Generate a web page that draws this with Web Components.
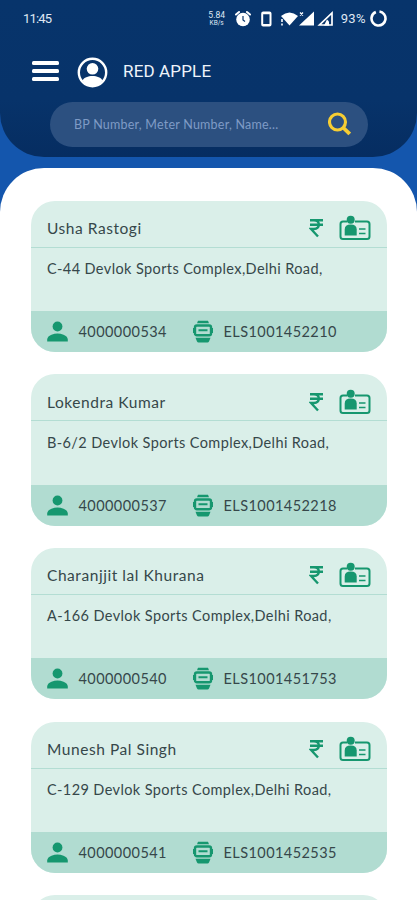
<!DOCTYPE html>
<html lang="en">
<head>
<meta charset="utf-8">
<meta name="viewport" content="width=device-width, initial-scale=1">
<title>Consumers</title>
<style>
    html, body {
        margin: 0;
        height: 100%;
        overflow: hidden;
    }
    body {
        font-family: Lato, "Open Sans", sans-serif;
        background: #fff;
    }
</style>
</head>
<body>
<app-screen>
    <status-bar slot="top"></status-bar>
    <app-header slot="top">RED APPLE</app-header>
    <search-box slot="top">BP Number, Meter Number, Name...</search-box>

    <consumer-card bp="4000000534" meter="ELS1001452210">
        <span slot="name">Usha Rastogi</span>
        <span slot="address">C-44 Devlok Sports Complex,Delhi Road,</span>
    </consumer-card>
    <consumer-card bp="4000000537" meter="ELS1001452218">
        <span slot="name">Lokendra Kumar</span>
        <span slot="address">B-6/2 Devlok Sports Complex,Delhi Road,</span>
    </consumer-card>
    <consumer-card bp="4000000540" meter="ELS1001451753">
        <span slot="name">Charanjjit lal Khurana</span>
        <span slot="address">A-166 Devlok Sports Complex,Delhi Road,</span>
    </consumer-card>
    <consumer-card bp="4000000541" meter="ELS1001452535">
        <span slot="name">Munesh Pal Singh</span>
        <span slot="address">C-129 Devlok Sports Complex,Delhi Road,</span>
    </consumer-card>
    <consumer-card></consumer-card>
</app-screen>

<script>
class AppScreen extends HTMLElement{

    constructor() {
        super();
        this.shadowDOM = this.attachShadow({mode: "open"});
    }

    connectedCallback(){
        this.render();
    }

    render(){
        this.shadowDOM.innerHTML = `
        <style>
            :host{
                display: flex;
                flex-direction: column;
                height: 900px;
                overflow: hidden;
                background: linear-gradient(#1456ad 0 220px, #fff 220px);
            }
            header{
                flex: none;
                box-sizing: border-box;
                height: 157px;
                border-radius: 0 0 44px 44px;
                background: linear-gradient(#07346b 0, #07336a 100px, #062d61 157px);
            }
            main{
                flex: 1;
                min-height: 0;
                display: flex;
                flex-direction: column;
                gap: 22.2px;
                margin-top: 10.5px;
                padding: 33.3px 30.5px 0 31px;
                border-radius: 44px 44px 0 0;
                background: #fff;
                overflow: hidden;
            }
        </style>
        <header><slot name="top"></slot></header>
        <main><slot></slot></main>
        `;
    }
}

class StatusBar extends HTMLElement{

    constructor() {
        super();
        this.shadowDOM = this.attachShadow({mode: "open"});
    }

    connectedCallback(){
        this.render();
    }

    render(){
        this.shadowDOM.innerHTML = `
        <style>
            :host{
                display: flex;
                align-items: center;
                height: 37px;
                padding: 0 30px 0 23px;
                color: #dfe7f3;
                font-family: Roboto, sans-serif;
                font-size: 13px;
            }
            .time{
                flex: 1;
                letter-spacing: -0.8px;
            }
            .rate{
                display: flex;
                flex-direction: column;
                width: 18px;
                margin-right: 9px;
                font-size: 8.5px;
                line-height: 9px;
                text-align: center;
            }
            .rate small{
                font-size: 6.5px;
                line-height: 7px;
            }
            .percent{
                margin: 0 4px 0 7px;
                letter-spacing: 0.4px;
            }
            svg{
                flex: none;
                fill: #fff;
                stroke: #fff;
                stroke-width: 0;
            }
        </style>
        <span class="time">11:45</span>
        <span class="rate"><span>5.84</span><small>KB/s</small></span>
        <svg width="16" height="18" viewBox="0 0 16 18">
            <circle cx="8" cy="9.500" r="6.800"/>
            <path d="M1 4.500 4 2M15 4.500 12 2" stroke-width="2" stroke-linecap="round"/>
            <path d="M8 6v4l2 1.500" fill="none" stroke="#07346b" stroke-width="1.200"/>
        </svg>
        <svg width="30" height="18" viewBox="0 0 30 18">
            <rect x="11.200" y="2.500" width="8.300" height="13" rx="1" fill="none" stroke-width="2"/>
            <path d="M11 3.200h9M11 15h9" stroke-width="2"/>
        </svg>
        <svg width="53" height="18" viewBox="0 0 53 18">
            <path d="M0 6Q8.500-1 17 6L8.500 15.500Z"/>
            <path d="M1 9v3M1 13.500v2" stroke-width="1.600"/>
            <path d="M33 1.500V15.500H18Z"/>
            <path d="M19 2.500l3 3M22 2.500l-3 3" stroke-width="1.300"/>
            <path d="M51 3V15H38.500Z" fill="none" stroke-width="1.700"/>
            <path d="M43 15.500l3-6 2 2v4z"/>
        </svg>
        <span class="percent">93%</span>
        <svg width="17" height="18" viewBox="0 0 17 18">
            <circle cx="8.500" cy="8.500" r="7" fill="none" stroke-width="2.600" stroke-dasharray="40 4" transform="rotate(-82 8.500 8.500)"/>
        </svg>
        `;
    }
}

class AppHeader extends HTMLElement{

    constructor() {
        super();
        this.shadowDOM = this.attachShadow({mode: "open"});
    }

    connectedCallback(){
        this.render();
    }

    render(){
        this.shadowDOM.innerHTML = `
        <style>
            :host{
                display: flex;
                align-items: center;
                height: 65px;
                padding-left: 32px;
                color: #eef3fa;
                font-family: Roboto, sans-serif;
                font-size: 17px;
            }
            .menu{
                display: flex;
                flex-direction: column;
                gap: 4.3px;
                width: 27px;
                margin: 3px 18px 0 0;
            }
            .menu i{
                height: 3.5px;
                border-radius: 1.5px;
                background: #fff;
            }
            svg{
                margin: 6px 15px 0 0;
            }
            .title{
                margin-top: 2px;
                letter-spacing: 0.15px;
            }
        </style>
        <div class="menu"><i></i><i></i><i></i></div>
        <svg width="31" height="31" viewBox="0 0 31 31">
            <circle cx="15.500" cy="15.500" r="13.700" fill="none" stroke="#fff" stroke-width="2.400"/>
            <circle cx="15.500" cy="11.800" r="5.800" fill="#fff"/>
            <path d="M5.500 23.500C8 17.500 23 17.500 25.500 23.500Q21.500 29 15.500 29T5.500 23.500Z" fill="#fff"/>
        </svg>
        <span class="title"><slot></slot></span>
        `;
    }
}

class SearchBox extends HTMLElement{

    constructor() {
        super();
        this.shadowDOM = this.attachShadow({mode: "open"});
    }

    connectedCallback(){
        this.render();
    }

    render(){
        this.shadowDOM.innerHTML = `
        <style>
            :host{
                display: flex;
                align-items: center;
                justify-content: space-between;
                box-sizing: border-box;
                height: 44.5px;
                margin: 0 49.5px 0 50px;
                padding: 0 17px 0 24px;
                border-radius: 23px;
                background: #2c5080;
                color: #7f9bc6;
                font-size: 12.5px;
                letter-spacing: 0.23px;
            }
            span{
                margin-top: 1px;
            }
        </style>
        <span><slot></slot></span>
        <svg width="23" height="24" viewBox="0 0 23 24" fill="none" stroke="#f6cd33">
            <circle cx="9.500" cy="10" r="8" stroke-width="3.100"/>
            <path d="M15 15.500 21.700 22" stroke-width="3.800"/>
        </svg>
        `;
    }
}

class ConsumerCard extends HTMLElement{

    constructor() {
        super();
        this.shadowDOM = this.attachShadow({mode: "open"});
    }

    connectedCallback(){
        this.render();
    }

    render(){
        const bp = this.getAttribute("bp") || "";
        const meter = this.getAttribute("meter") || "";
        this.shadowDOM.innerHTML = `
        <style>
            :host{
                display: flex;
                flex: none;
                flex-direction: column;
                height: 151.4px;
                border-radius: 24px;
                overflow: hidden;
                background: #daefe9;
                color: #36474a;
                font-size: 14px;
            }
            .head{
                display: flex;
                align-items: center;
                box-sizing: border-box;
                height: 47px;
                padding: 9px 16px 0 16px;
                border-bottom: 1px solid #b3ddd3;
            }
            .name{
                flex: 1;
                font-size: 15.5px;
                letter-spacing: 0.55px;
            }
            .address{
                flex: 1;
                padding: 12.5px 16px 0;
                font-size: 14.5px;
                line-height: 17px;
                letter-spacing: 0.39px;
                white-space: nowrap;
            }
            .foot{
                display: flex;
                align-items: center;
                height: 41px;
                padding-left: 16px;
                background: #b1dcd1;
                font-size: 14.5px;
                letter-spacing: 0.43px;
            }
            .bp{
                width: 114.5px;
                margin-left: 10.5px;
            }
            .meter{
                margin-left: 10.5px;
            }
            .rupee{
                margin-right: 15px;
            }
            svg{
                flex: none;
                fill: #16976f;
                stroke: #16976f;
                stroke-width: 0;
            }
        </style>
        <div class="head">
            <span class="name"><slot name="name"></slot></span>
            <svg class="rupee" width="15" height="20" viewBox="0 0 15 20">
                <path d="M1 2.200H14M1 6.700H14M1 2.200H5C11.500 2.200 11.500 11 5 11H2L9 18.500" fill="none" stroke-width="2.400"/>
            </svg>
            <svg width="32" height="26" viewBox="0 0 32 26">
                <path d="M8 6.500H4Q1.500 6.500 1.500 9V21.500Q1.500 24 4 24H28Q30.500 24 30.500 21.500V9Q30.500 6.500 28 6.500H16" fill="none" stroke-width="2"/>
                <circle cx="11.700" cy="4.800" r="4"/>
                <path d="M5.700 20.500V14.500Q5.700 9.500 11.700 9.500T17.700 14.500V20.500Z"/>
                <path d="M20 14H26.500M20 18.500H26.500" stroke-width="1.700"/>
            </svg>
        </div>
        <div class="address"><slot name="address"></slot></div>
        <div class="foot">
            <svg width="21" height="21" viewBox="0 0 21 21">
                <circle cx="10.500" cy="5.500" r="4.900"/>
                <path d="M.2 20.500V18.500Q.2 15.500 4.500 13.700 10.500 11.500 16.500 13.700 20.800 15.500 20.800 18.500V20.500Z"/>
            </svg>
            <span class="bp">${bp}</span>
            <svg width="20" height="23" viewBox="0 0 20 23">
                <path d="M5 .7H15L16 3.200H4Z"/>
                <rect x="2" y="5.500" width="16" height="9.700" rx="1.800" fill="none" stroke-width="2.400"/>
                <path d="M0 8H2V13H0ZM18 8H20V13H18Z"/>
                <path d="M5.500 10.300H14.500" stroke-width="2"/>
                <path d="M2.500 17.800H17.500L16 21.500Q15.500 22.500 14.500 22.500H5.500Q4.500 22.500 4 21.500Z"/>
            </svg>
            <span class="meter">${meter}</span>
        </div>
        `;
    }
}

customElements.define('app-screen',AppScreen);
customElements.define('status-bar',StatusBar);
customElements.define('app-header',AppHeader);
customElements.define('search-box',SearchBox);
customElements.define('consumer-card',ConsumerCard);
</script>
</body>
</html>
